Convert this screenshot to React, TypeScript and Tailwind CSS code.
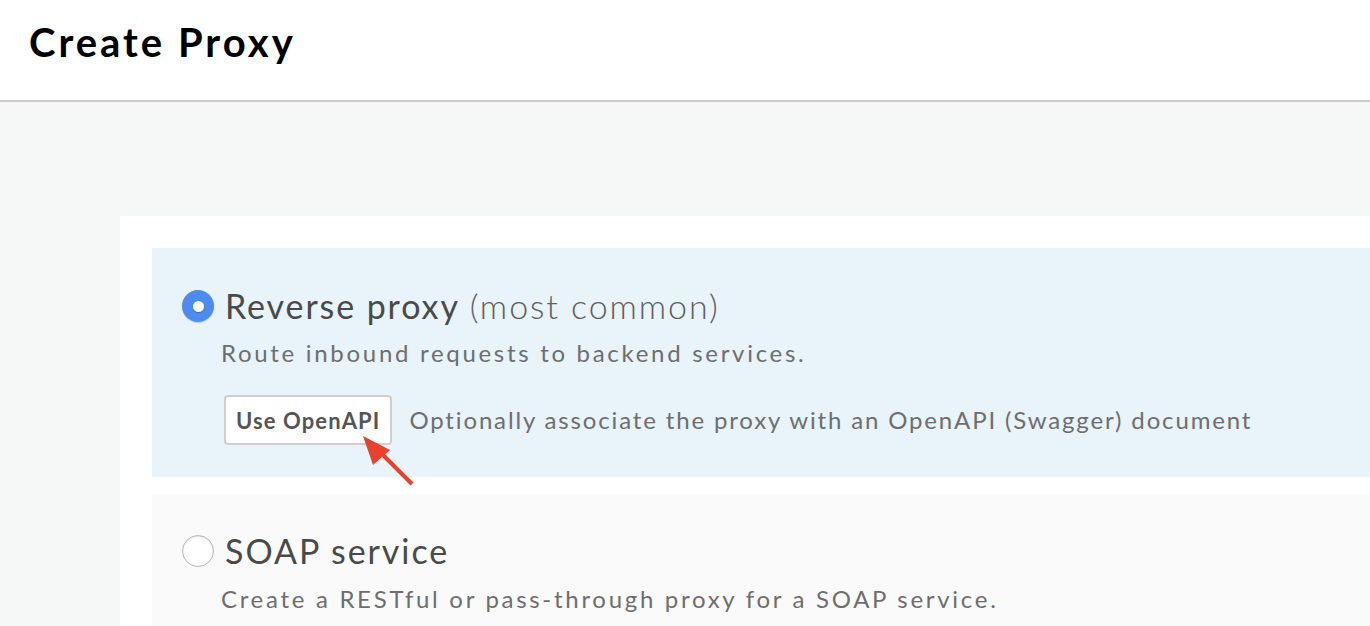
import React from "react";

function Radio({ checked }: { checked: boolean }) {
  if (checked) {
    return (
      <span className="flex h-[32px] w-[32px] shrink-0 items-center justify-center rounded-full bg-[#4e8bf0] shadow-[0_1px_1px_rgba(0,0,0,0.15)]">
        <span className="h-[11px] w-[11px] rounded-full bg-white shadow-[0_1px_1px_rgba(0,0,0,0.25)]" />
      </span>
    );
  }
  return (
    <span className="h-[32px] w-[32px] shrink-0 rounded-full border border-[#b8b8b8] bg-white shadow-[inset_0_1px_2px_rgba(0,0,0,0.12)]" />
  );
}

export default function App() {
  return (
    <div
      className="relative h-[626px] w-[1370px] overflow-hidden bg-[#f6f8f8]"
      style={{ fontFamily: "Lato, 'Open Sans', sans-serif" }}
    >
      <header className="flex h-[102px] items-start border-b-2 border-[#cccccc] bg-white pl-[29px] pt-[18px]">
        <h1 className="text-[40px] font-bold leading-[48px] tracking-[3px] text-black">Create Proxy</h1>
      </header>

      <main className="pl-[120px] pt-[114px]">
        <div className="bg-white pl-[32px] pt-[32px]">
          <section className="h-[229px] bg-[#e8f3fa] pl-[30px] pt-[38px]">
            <div className="flex h-[40px] items-center gap-[11px]">
              <Radio checked />
              <div className="whitespace-nowrap text-[34px] leading-[40px] tracking-[1.9px] text-[#4a4a4a]">
                Reverse proxy{" "}
                <span className="font-light text-[#5e5e5e]">(most common)</span>
              </div>
            </div>
            <p className="mt-[12px] whitespace-nowrap pl-[39px] text-[24px] leading-[30px] tracking-[2.7px] text-[#6e6e6e]">
              Route inbound requests to backend services.
            </p>
            <div className="mt-[27px] flex items-center gap-[17px] pl-[42px]">
              <button className="h-[50px] whitespace-nowrap rounded-[4px] border-2 border-[#cfcfcf] bg-white px-[10px] text-[22px] font-bold tracking-[1.1px] text-[#555555]">
                Use OpenAPI
              </button>
              <span className="whitespace-nowrap text-[24px] leading-[30px] tracking-[1.85px] text-[#6e6e6e]">
                Optionally associate the proxy with an OpenAPI (Swagger) document
              </span>
            </div>
          </section>
          <div className="h-[17px]" />
          <section className="h-[200px] bg-[#fafafa] pl-[30px] pt-[37px]">
            <div className="flex h-[40px] items-center gap-[11px]">
              <Radio checked={false} />
              <div className="whitespace-nowrap text-[34px] leading-[40px] tracking-[1.95px] text-[#4a4a4a]">SOAP service</div>
            </div>
            <p className="mt-[13px] whitespace-nowrap pl-[39px] text-[24px] leading-[30px] tracking-[2.7px] text-[#6e6e6e]">
              Create a RESTful or pass-through proxy for a SOAP service.
            </p>
          </section>
        </div>
      </main>

      <svg
        className="pointer-events-none absolute left-[355px] top-[430px]"
        width="70"
        height="65"
        viewBox="0 0 70 65"
      >
        <line x1="57" y1="54" x2="22" y2="19" stroke="#e8412c" strokeWidth="4" strokeLinecap="butt" />
        <polygon points="8,6 18,35 35,20" fill="#e8412c" />
      </svg>
    </div>
  );
}
